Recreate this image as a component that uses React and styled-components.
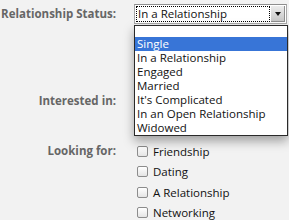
import React from "react";
import styled, { createGlobalStyle } from "styled-components";

const Global = createGlobalStyle`
  html, body {
    margin: 0;
    padding: 0;
    background: #f2f2f2;
  }
  body {
    font-family: "Open Sans", "DejaVu Sans", sans-serif;
    font-size: 11.5px;
    color: #111;
  }
`;

const Form = styled.div`
  display: grid;
  grid-template-columns: 116px 1fr;
  column-gap: 18px;
  padding-top: 4px;
  width: 289px;
  box-sizing: border-box;
`;

const Label = styled.div`
  text-align: right;
  font-weight: 700;
  color: #666;
  line-height: 20px;
  margin-top: ${(p) => p.top || 0}px;
  white-space: nowrap;
`;

const Field = styled.div`
  margin-top: ${(p) => p.top || 0}px;
  min-height: ${(p) => p.h || 0}px;
  position: relative;
`;

const Select = styled.div`
  display: flex;
  align-items: stretch;
  width: 153px;
  height: 20px;
  box-sizing: border-box;
  background: #fff;
  border: 1px solid #a8a8a8;
  border-top-color: #8e8e8e;
  padding: 1px;
`;

const SelectValue = styled.div`
  flex: 1;
  border: 1px dotted #000;
  line-height: 14px;
  padding-left: 1px;
  margin-right: 1px;
  white-space: nowrap;
  overflow: hidden;
`;

const ArrowButton = styled.div`
  width: 14px;
  display: flex;
  align-items: center;
  justify-content: center;
  background: linear-gradient(#ececec, #c8c8c8);
  border-right: 1px solid #8f8f8f;
  border-bottom: 1px solid #8f8f8f;
  box-sizing: border-box;
`;

const Triangle = styled.div`
  width: 0;
  height: 0;
  border-left: 3.5px solid transparent;
  border-right: 3.5px solid transparent;
  border-top: 4px solid #111;
`;

const Menu = styled.div`
  position: absolute;
  left: 0;
  top: 21px;
  width: 154px;
  box-sizing: border-box;
  background: #fff;
  border: 1px solid #2a2a2a;
  box-shadow: 0 5px 10px rgba(0, 0, 0, 0.35);
  z-index: 2;
`;

const Option = styled.div`
  height: ${(p) => (p.blank ? 11 : 14)}px;
  line-height: 14px;
  padding-left: 2px;
  white-space: nowrap;
  background: ${(p) => (p.selected ? "#3875d7" : "transparent")};
  color: ${(p) => (p.selected ? "#fff" : "#111")};
`;

const CheckRow = styled.label`
  display: flex;
  align-items: center;
  height: 20.5px;
  padding-left: 3px;
`;

const Box = styled.span`
  width: 11px;
  height: 11px;
  box-sizing: border-box;
  border: 1px solid #8c8c8c;
  border-radius: 2px;
  background: linear-gradient(#ffffff, #e4e4e4);
  margin-right: 5px;
  flex: none;
`;

const statuses = [
  "Single",
  "In a Relationship",
  "Engaged",
  "Married",
  "It's Complicated",
  "In an Open Relationship",
  "Widowed",
];

const Check = ({ children }) => (
  <CheckRow>
    <Box />
    {children}
  </CheckRow>
);

export default function App() {
  return (
    <>
      <Global />
      <Form>
        <Label>Relationship Status:</Label>
        <Field>
          <Select>
            <SelectValue>In a Relationship</SelectValue>
            <ArrowButton>
              <Triangle />
            </ArrowButton>
          </Select>
          <Menu>
            <Option blank />
            {statuses.map((s) => (
              <Option key={s} selected={s === "Single"}>
                {s}
              </Option>
            ))}
          </Menu>
        </Field>

        <Label top={67}>Interested in:</Label>
        <Field top={67} h={40} />

        <Label top={10}>Looking for:</Label>
        <Field top={10}>
          <Check>Friendship</Check>
          <Check>Dating</Check>
          <Check>A Relationship</Check>
          <Check>Networking</Check>
        </Field>
      </Form>
    </>
  );
}
